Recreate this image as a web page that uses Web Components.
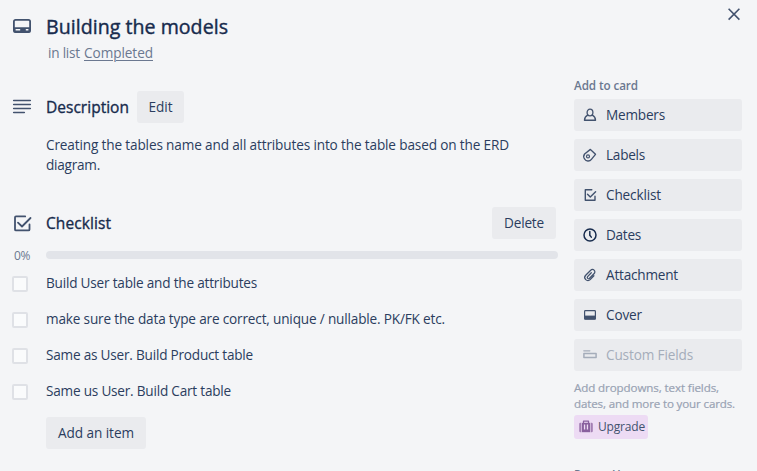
<!DOCTYPE html>
<html lang="en">
<head>
<meta charset="utf-8">
<title>Card</title>
<style>
html,body{margin:0;height:100%;overflow:hidden;background:#f4f5f7}
body{font-family:"Open Sans","Noto Sans",sans-serif;color:#2b3d5e;font-size:13.6px;line-height:20px}
</style>
</head>
<body>
<card-window></card-window>
<script>
const make = (name, html, setup) => {
  const t = document.createElement('template');
  t.innerHTML = html;
  customElements.define(name, class extends HTMLElement {
    constructor() {
      super();
      this.attachShadow({ mode: 'open' }).append(t.content.cloneNode(true));
    }
    connectedCallback() { if (setup) setup(this, this.shadowRoot); }
  });
};

// A single line of text whose tracking is adjusted to a set width.
make('text-line', `<style>
:host{display:inline-block;white-space:nowrap}
span{display:inline-block}
:host([underline]) span{text-decoration:underline;text-decoration-thickness:1px;text-underline-offset:2px}
</style><span><slot></slot></span>`, (el, root) => {
  const s = root.querySelector('span');
  const want = +el.getAttribute('w');
  const n = el.textContent.length;
  if (want && n) {
    s.style.letterSpacing = (want - s.getBoundingClientRect().width) / n + 'px';
    el.style.width = want + 'px';
  }
});

const S = 'fill="none" stroke="currentColor" stroke-linecap="round" stroke-linejoin="round"';
const ICONS = {
  card: [20, 16, `<rect x="2.9" y="1.9" width="16.2" height="12.2" rx="1.6" ${S} stroke-width="1.8"/><path d="M2.9 9.3h16.2v4.2a1 1 0 0 1-1 1H3.9a1 1 0 0 1-1-1z" fill="currentColor"/><path d="M4.6 11.8h4.6M14.8 11.8h2.6" stroke="#f4f5f7" stroke-width="1.5"/>`],
  lines: [20, 16, `<path d="M2.7 1.5h16.6M2.7 5.5h16.6M2.7 9.5h16.6M2.7 13.5h10.6" ${S} stroke-width="1.6"/>`],
  check: [20, 18, `<path d="M14.2 2.4H5a1 1 0 0 0-1 1v12a1 1 0 0 0 1 1h12.5a1 1 0 0 0 1-1V10.5" ${S} stroke-width="1.8"/><path d="M7 8.6l4 3.9L19.5 4" ${S} stroke-width="1.8"/>`],
  close: [14, 14, `<path d="M1.6 1.8l10.8 10.8M12.4 1.8L1.6 12.6" fill="none" stroke="currentColor" stroke-width="1.6"/>`],
  member: [14, 14, `<ellipse cx="7" cy="4.5" rx="2.9" ry="3.3" ${S} stroke-width="1.3"/><path d="M4.7 7.1C2.6 8 1.6 9.6 1.5 12.3h11C12.4 9.6 11.4 8 9.3 7.1" ${S} stroke-width="1.4"/>`],
  label: [14, 14, `<path d="M7.4 1.4L12.5 6.3 8.4 11.4A4.1 4.1 0 0 1 1.6 11a4.2 4.2 0 0 1 0-5z" ${S} stroke-width="1.35"/><circle cx="5" cy="8.4" r="1.5" ${S} stroke-width="1.2"/>`],
  checksm: [14, 14, `<path d="M8.8 1.8H2.3v10.4h9.7V8.2" ${S} stroke-width="1.4"/><path d="M4.5 6.3l2.8 2.8 5.3-5.4" ${S} stroke-width="1.4"/>`],
  clock: [14, 14, `<circle cx="7" cy="7" r="6" ${S} stroke-width="1.5"/><path d="M6.8 3.5v3.7l1.5 1.9" ${S} stroke-width="1.5"/>`],
  clip: [14, 14, `<path d="M10.9 7.8l-3.7 3.8a3.1 3.1 0 0 1-4.5-4.4l5-5a2.35 2.35 0 0 1 3.5 3.3L6.5 10.3a1.25 1.25 0 0 1-1.9-1.7l3.7-3.9" ${S} stroke-width="1.25"/>`],
  cover: [14, 14, `<rect x="1.6" y="2.6" width="10.8" height="8.6" rx=".8" ${S} stroke-width="1.2"/><path d="M1.5 7.6h11v3.8h-11z" fill="currentColor"/>`],
  fields: [14, 14, `<path d="M.8 2.8h6" ${S} stroke-width="1.3"/><path d="M.9 5.4h12.2v4H.9z" ${S} stroke-width="1.5"/>`],
  bag: [14, 14, `<path d="M4.5 2.6V1.2h5v1.4" ${S} stroke-width="1.3"/><path d="M.2 4a1.2 1.2 0 0 1 1.2-1.2h1v9.4h-1A1.2 1.2 0 0 1 .2 11zM13.8 4a1.2 1.2 0 0 0-1.2-1.2h-1v9.4h1a1.2 1.2 0 0 0 1.2-1.2z" fill="currentColor" opacity=".75"/><path d="M3 2.8h8v9.4H3z" fill="currentColor"/><path d="M4.9 4.6h1.3v4.8H4.9zM7.8 4.6h1.3v4.8H7.8z" fill="#eddbf4"/>`]
};
make('ui-icon', `<style>:host{display:block;flex:none}svg{display:block;overflow:visible}</style><div></div>`, (el, root) => {
  const icon = ICONS[el.getAttribute('name')];
  if (!icon) return;
  const [w, h, body] = icon;
  root.querySelector('div').innerHTML = `<svg width="${w}" height="${h}" viewBox="0 0 ${w} ${h}">${body}</svg>`;
});

make('ui-button', `<style>
:host{display:flex;flex:none;align-items:center;justify-content:center;height:32px;border-radius:3px;background:#eaebee;box-sizing:border-box}
</style><slot></slot>`);

make('side-button', `<style>
:host{display:flex;align-items:center;gap:9px;height:32px;padding-left:9px;border-radius:3px;background:#eaebee;box-sizing:border-box}
ui-icon{color:var(--icon,#42526e)}
:host([disabled]){color:#a5adba;--icon:#a5adba}
</style><ui-icon></ui-icon><slot></slot>`, (el, root) => {
  const i = document.createElement('ui-icon');
  i.setAttribute('name', el.getAttribute('icon'));
  root.querySelector('ui-icon').replaceWith(i);
});

// Section header: icon gutter, heading and actions.
make('section-head', `<style>
:host{display:flex;align-items:center;height:32px}
.gutter{width:34px;flex:none;color:#42526e}
.title{font-size:15.5px;color:#172b4d;-webkit-text-stroke:.35px #172b4d}
</style><div class="gutter"><slot name="icon"></slot></div><div class="title"><slot></slot></div><slot name="action"></slot>`);

make('check-item', `<style>
:host{display:flex;align-items:center;height:36px}
i{box-sizing:border-box;width:16px;height:16px;margin:1px 18px 0 0;border:2px solid #dfe1e6;border-radius:2px;background:#fafbfc}
</style><i></i><slot></slot>`);

make('card-main', `<style>
:host{display:block;padding:15px 0 0 12px;width:546px;box-sizing:content-box}
.top{display:flex;height:24px;line-height:24px;font-size:19.6px;color:#172b4d;-webkit-text-stroke:.4px #172b4d}
.top ui-icon{color:#42526e;margin:3px 15px 0 -1px}
.sub{display:flex;gap:4px;padding-left:36px;margin-top:4px;color:#6b7890}
.desc{margin-top:28px}
.desc ui-button{width:47px;margin-left:8px}
.para{display:flex;flex-direction:column;padding-left:34px;margin-top:12px}
.chk{margin-top:32px}
.chk ui-button{width:64px;margin:0 2px 0 auto}
ui-icon[slot]{margin-left:-1px}
.bar{display:flex;align-items:center;height:20px;margin-top:6px;font-size:12px;color:#6b7890}
.bar text-line{margin:1px 16px 0 2px}
.bar div{flex:1;height:8px;background:#e2e4e9;border-radius:4px}
.add{width:100px;margin:8px 0 0 34px}
</style>
<div class="top"><ui-icon name="card"></ui-icon><text-line w="182">Building the models</text-line></div>
<div class="sub"><text-line w="32">in list</text-line><text-line w="69" underline>Completed</text-line></div>
<section-head class="desc"><ui-icon slot="icon" name="lines"></ui-icon><text-line w="83">Description</text-line><ui-button slot="action"><text-line w="24">Edit</text-line></ui-button></section-head>
<div class="para"><text-line w="463">Creating the tables name and all attributes into the table based on the ERD</text-line><text-line w="54">diagram.</text-line></div>
<section-head class="chk"><ui-icon slot="icon" name="check"></ui-icon><text-line w="65">Checklist</text-line><ui-button slot="action"><text-line w="40">Delete</text-line></ui-button></section-head>
<div class="bar"><text-line w="16">0%</text-line><div></div></div>
<check-item><text-line w="211">Build User table and the attributes</text-line></check-item>
<check-item><text-line w="399">make sure the data type are correct, unique / nullable. PK/FK etc.</text-line></check-item>
<check-item><text-line w="207">Same as User. Build Product table</text-line></check-item>
<check-item><text-line w="185">Same us User. Build Cart table</text-line></check-item>
<ui-button class="add"><text-line w="76">Add an item</text-line></ui-button>`);

make('card-side', `<style>
:host{display:flex;flex-direction:column;width:168px;padding-left:16px}
:host>*,.close,h3,.list,.note,.up{flex:none}
.close{align-self:flex-end;color:#42526e;margin:7px 1px 54px 0}
h3{margin:0 0 4px;height:20px;font-size:11.7px;font-weight:600;color:#6b7890}
.list{display:flex;flex-direction:column;gap:8px}
.note{display:flex;flex-direction:column;line-height:16px;font-size:11.6px;color:#98a2b3;-webkit-text-stroke:.2px #98a2b3;margin-top:9px}
.up{display:flex;align-items:center;gap:5px;width:74px;height:24px;box-sizing:border-box;padding-left:5px;margin:3px 0 25px;border-radius:3px;background:#eddbf4;color:#42526e;font-size:12px}
.up ui-icon{color:#89609e}
</style>
<ui-icon class="close" name="close"></ui-icon>
<h3><text-line w="64">Add to card</text-line></h3>
<div class="list">
<side-button icon="member"><text-line w="59">Members</text-line></side-button>
<side-button icon="label"><text-line w="39">Labels</text-line></side-button>
<side-button icon="checksm"><text-line w="55">Checklist</text-line></side-button>
<side-button icon="clock" style="--icon:#172b4d"><text-line w="35">Dates</text-line></side-button>
<side-button icon="clip"><text-line w="72">Attachment</text-line></side-button>
<side-button icon="cover"><text-line w="36">Cover</text-line></side-button>
<side-button icon="fields" disabled><text-line w="87">Custom Fields</text-line></side-button>
</div>
<div class="note"><text-line w="145">Add dropdowns, text fields,</text-line><text-line w="161">dates, and more to your cards.</text-line></div>
<div class="up"><ui-icon name="bag"></ui-icon><text-line w="47">Upgrade</text-line></div>
<h3><text-line w="59">Power-Ups</text-line></h3>`);

make('card-window', `<style>
:host{display:flex;width:757px;height:471px;overflow:hidden;background:#f4f5f7}
</style><card-main></card-main><card-side></card-side>`);
</script>
</body>
</html>
